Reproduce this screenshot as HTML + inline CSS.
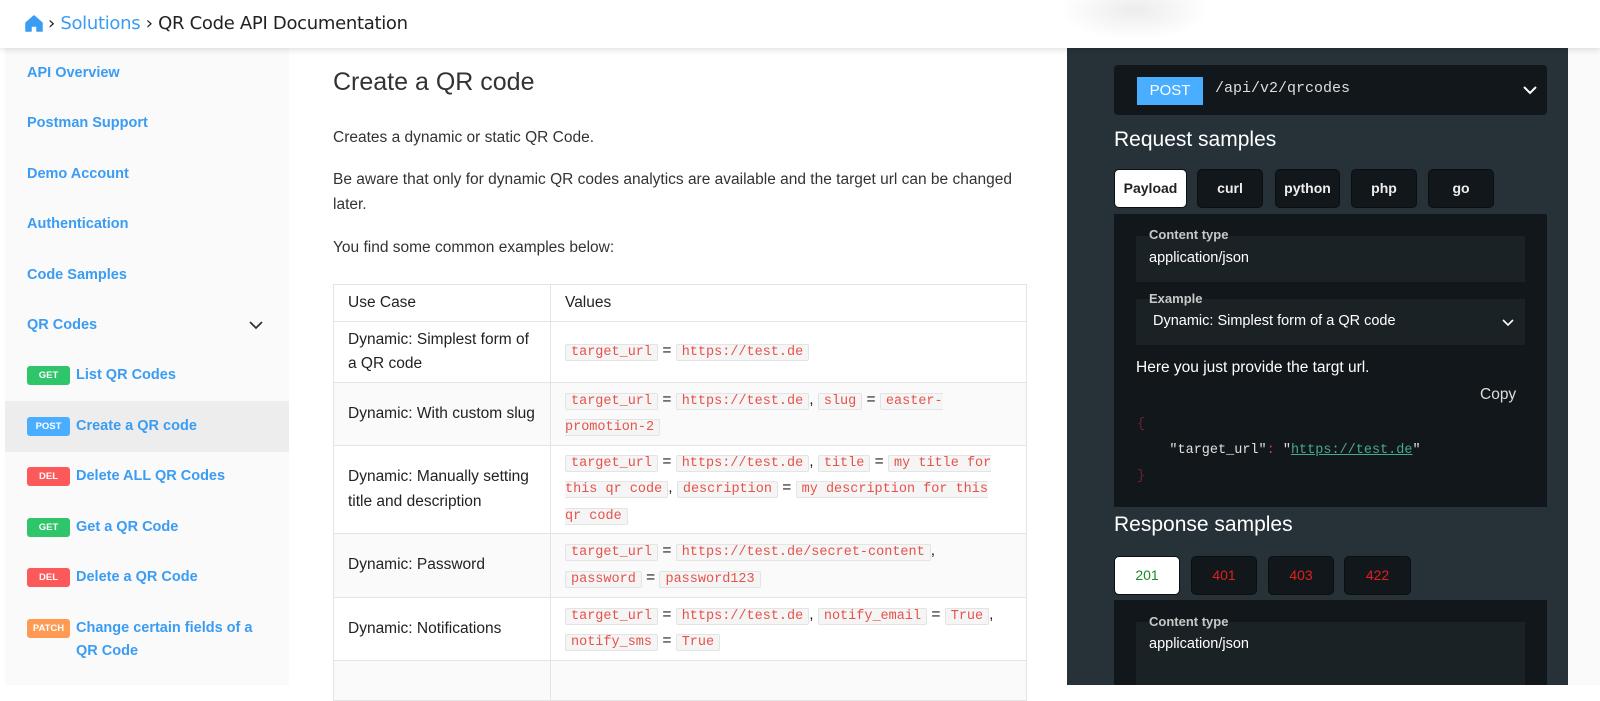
<!DOCTYPE html>
<html><head><meta charset="utf-8"><style>
*{box-sizing:border-box;margin:0;padding:0}
body{width:1600px;height:685px;overflow:hidden;background:#fff;font-family:"Liberation Sans",Arial,sans-serif;position:relative}
.a{position:absolute}
#hdr{left:0;top:0;width:1600px;height:48px;background:#fff;box-shadow:0 2px 6px rgba(0,0,0,.12);z-index:5}
#side{left:5px;top:48px;width:284px;height:637px;background:#fafafa}
.si{position:absolute;left:22px;font-size:14.5px;font-weight:bold;color:#3a9cf2;line-height:23px}
.bd{display:inline-block;width:43px;height:19px;border-radius:3px;color:#fff;font-size:9.5px;font-weight:bold;text-align:center;line-height:19px;margin-right:6px;vertical-align:1px}
.code{font-family:"Liberation Mono",monospace;font-size:13.5px;color:#e5534b;background:#f5f5f5;border:1px solid #e4e4e4;border-radius:2px;padding:0 5px}
table{border-collapse:collapse;font-size:15.5px;color:#222}
td{border:1px solid #e4e4e4;padding:0 14px;vertical-align:middle;line-height:24.5px}
#right{left:1067px;top:48px;width:501px;height:637px;background:#263238}
.tab{position:absolute;height:39px;border-radius:5px;background:#11171a;border:1px solid #0b0f11;color:#eee;font-size:14px;font-weight:bold;text-align:center;line-height:37px}
.box{position:absolute;left:1136px;width:389px;height:46px;background:#1b2226}
.lbl{position:absolute;left:1149px;font-size:13px;font-weight:bold;color:#c8c8c8}
</style></head><body>
<div id="hdr" class="a">
 <svg class="a" style="left:25px;top:15px" width="18" height="17" viewBox="0 0 18 17"><path d="M9 1 L17 8 V16 H12 V11 H6 V16 H1 V8 Z" fill="#3a9cf2" stroke="#3a9cf2" stroke-linejoin="round" stroke-width="1.5"/></svg>
 <div class="a" style="left:48px;top:13px;font-size:18px;color:#222;font-family:'DejaVu Sans',sans-serif;letter-spacing:-0.3px">› <span style="color:#3a9cf2">Solutions</span> › QR Code API Documentation</div>
</div>
<div class="a" style="left:1060px;top:-20px;width:150px;height:60px;border-radius:50%;background:radial-gradient(closest-side,#ececec,#fff);z-index:6"></div>
<div id="side" class="a"></div>
<div class="a" style="left:5px;top:401px;width:284px;height:51px;background:#ededed"></div>
<div class="si" style="top:62px;left:27px">API Overview</div>
<div class="si" style="top:112px;left:27px">Postman Support</div>
<div class="si" style="top:163px;left:27px">Demo Account</div>
<div class="si" style="top:213px;left:27px">Authentication</div>
<div class="si" style="top:264px;left:27px">Code Samples</div>
<div class="si" style="top:314px;left:27px">QR Codes</div>
<svg class="a" style="left:249px;top:320px" width="14" height="10"><path d="M1 2 L7 8 L13 2" stroke="#333" stroke-width="1.8" fill="none"/></svg>
<div class="si" style="top:364px;left:27px"><span class="bd" style="background:#2ec56b">GET</span>List QR Codes</div>
<div class="si" style="top:415px;left:27px"><span class="bd" style="background:#49aeff">POST</span>Create a QR code</div>
<div class="si" style="top:465px;left:27px"><span class="bd" style="background:#fc5a5a">DEL</span>Delete ALL QR Codes</div>
<div class="si" style="top:516px;left:27px"><span class="bd" style="background:#2ec56b">GET</span>Get a QR Code</div>
<div class="si" style="top:566px;left:27px"><span class="bd" style="background:#fc5a5a">DEL</span>Delete a QR Code</div>
<div class="si" style="top:617px;left:27px"><span class="bd" style="background:#ff9a52">PATCH</span>Change certain fields of a</div>
<div class="si" style="top:640px;left:76px">QR Code</div>

<div class="a" style="left:333px;top:68px;font-size:25px;color:#333">Create a QR code</div>
<div class="a" style="left:333px;top:126px;font-size:15.5px;color:#333;line-height:24px;width:700px">Creates a dynamic or static QR Code.</div>
<div class="a" style="left:333px;top:168px;font-size:15.5px;color:#333;line-height:24.5px;width:700px">Be aware that only for dynamic QR codes analytics are available and the target url can be changed later.</div>
<div class="a" style="left:333px;top:236px;font-size:15.5px;color:#333;line-height:24px">You find some common examples below:</div>
<table class="a" style="left:333px;top:284px;width:694px">
<tr style="height:37px"><td style="width:217px">Use Case</td><td>Values</td></tr>
<tr style="height:61px"><td>Dynamic: Simplest form of a QR code</td><td><span class="code">target_url</span> = <span class="code">https://test.de</span></td></tr>
<tr style="height:63px;background:#fafafa"><td>Dynamic: With custom slug</td><td><span class="code">target_url</span> = <span class="code">https://test.de</span>, <span class="code">slug</span> = <span class="code">easter-promotion-2</span></td></tr>
<tr style="height:88px"><td>Dynamic: Manually setting title and description</td><td><span class="code">target_url</span> = <span class="code">https://test.de</span>, <span class="code">title</span> = <span class="code">my title for this qr code</span>, <span class="code">description</span> = <span class="code">my description for this qr code</span></td></tr>
<tr style="height:64px;background:#fafafa"><td>Dynamic: Password</td><td><span class="code">target_url</span> = <span class="code">https://test.de/secret-content</span>,<br><span class="code">password</span> = <span class="code">password123</span></td></tr>
<tr style="height:63px"><td>Dynamic: Notifications</td><td><span class="code">target_url</span> = <span class="code">https://test.de</span>, <span class="code">notify_email</span> = <span class="code">True</span>,<br><span class="code">notify_sms</span> = <span class="code">True</span></td></tr>
<tr style="height:40px;background:#fafafa"><td></td><td></td></tr>
</table>

<div id="right" class="a"></div>
<div class="a" style="left:1568px;top:48px;width:32px;height:637px;background:#fafafa"></div>
<div class="a" style="left:1114px;top:65px;width:433px;height:50px;background:#11171a;border-radius:4px"></div>
<div class="a" style="left:1137px;top:77px;width:66px;height:28px;background:#49aeff;color:#fff;font-size:15px;text-align:center;line-height:28px">POST</div>
<div class="a" style="left:1215px;top:80px;font-family:'Liberation Mono',monospace;font-size:15px;color:#ddd">/api/v2/qrcodes</div>
<svg class="a" style="left:1523px;top:85px" width="14" height="10"><path d="M1 2 L7 8 L13 2" stroke="#fff" stroke-width="2" fill="none"/></svg>
<div class="a" style="left:1114px;top:128px;font-size:21px;color:#fff">Request samples</div>
<div class="tab" style="left:1114px;top:169px;width:73px;background:#fff;color:#222">Payload</div>
<div class="tab" style="left:1197px;top:169px;width:66px">curl</div>
<div class="tab" style="left:1275px;top:169px;width:65px">python</div>
<div class="tab" style="left:1351px;top:169px;width:66px">php</div>
<div class="tab" style="left:1428px;top:169px;width:66px">go</div>
<div class="a" style="left:1114px;top:214px;width:433px;height:293px;background:#11171a"></div>
<div class="box" style="top:236px"></div>
<div class="lbl" style="top:227px">Content type</div>
<div class="a" style="left:1149px;top:250px;font-size:14.5px;color:#fff">application/json</div>
<div class="box" style="top:299px"></div>
<div class="lbl" style="top:291px">Example</div>
<div class="a" style="left:1153px;top:313px;font-size:14.5px;color:#fff">Dynamic: Simplest form of a QR code</div>
<svg class="a" style="left:1502px;top:318px" width="12" height="9"><path d="M1 2 L6 7 L11 2" stroke="#fff" stroke-width="1.6" fill="none"/></svg>
<div class="a" style="left:1136px;top:359px;font-size:15.5px;color:#fff">Here you just provide the targt url.</div>
<div class="a" style="left:1480px;top:386px;font-size:15.5px;color:#ddd">Copy</div>
<div class="a" style="left:1137px;top:412px;font-family:'Liberation Mono',monospace;font-size:13.5px;color:#e0e0e0;line-height:26px;white-space:pre"><span style="color:#6d2233">{</span>
    "target_url"<span style="color:#d2365a">:</span> "<span style="color:#48a890;text-decoration:underline">https://test.de</span>"
<span style="color:#6d2233">}</span></div>
<div class="a" style="left:1114px;top:513px;font-size:21px;color:#fff">Response samples</div>
<div class="tab" style="left:1114px;top:556px;width:66px;background:#fff;color:#1c8a25;font-weight:normal">201</div>
<div class="tab" style="left:1191px;top:556px;width:66px;color:#e02020;font-weight:normal">401</div>
<div class="tab" style="left:1268px;top:556px;width:66px;color:#e02020;font-weight:normal">403</div>
<div class="tab" style="left:1344px;top:556px;width:67px;color:#e02020;font-weight:normal">422</div>
<div class="a" style="left:1114px;top:600px;width:433px;height:85px;background:#11171a"></div>
<div class="box" style="top:622px;height:63px"></div>
<div class="lbl" style="top:614px">Content type</div>
<div class="a" style="left:1149px;top:636px;font-size:14.5px;color:#fff">application/json</div>
</body></html>
